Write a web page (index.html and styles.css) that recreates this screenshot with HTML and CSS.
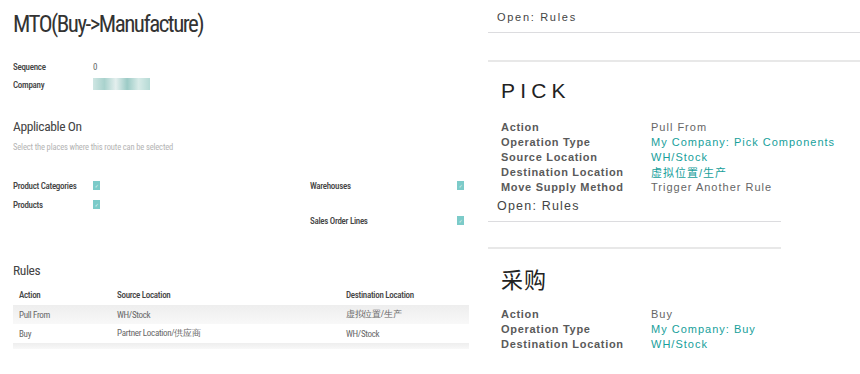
FILE: index.html
```html
<!DOCTYPE html>
<html>
<head>
<meta charset="utf-8">
<link rel="stylesheet" href="styles.css">
</head>
<body>
<div class="page">
  <section class="form">
    <h1 class="title">MTO(Buy-&gt;Manufacture)</h1>
    <div class="fields">
      <div class="field"><span class="lbl">Sequence</span><span class="val">0</span></div>
      <div class="field"><span class="lbl">Company</span><span class="val"><span class="blur"></span></span></div>
    </div>
    <h2 class="sect">Applicable On</h2>
    <p class="hint">Select the places where this route can be selected</p>
    <div class="applic">
      <div class="col">
        <div class="chk-row"><span class="lbl">Product Categories</span><span class="box">✓</span></div>
        <div class="chk-row"><span class="lbl">Products</span><span class="box">✓</span></div>
      </div>
      <div class="col col-r">
        <div class="chk-row"><span class="lbl lbl-r">Warehouses</span><span class="box">✓</span></div>
        <div class="chk-row gap"><span class="lbl lbl-r">Sales Order Lines</span><span class="box">✓</span></div>
      </div>
    </div>
    <h2 class="sect rules-h">Rules</h2>
    <table class="rules">
      <thead><tr><th class="c1">Action</th><th class="c2">Source Location</th><th>Destination Location</th></tr></thead>
      <tbody>
        <tr class="odd"><td>Pull From</td><td>WH/Stock</td><td>虚拟位置/生产</td></tr>
        <tr><td>Buy</td><td>Partner Location/供应商</td><td>WH/Stock</td></tr>
        <tr class="odd tail"><td></td><td></td><td></td></tr>
      </tbody>
    </table>
  </section>
  <section class="doc">
    <div class="open first">Open: Rules</div>
    <hr class="rule-a">
    <hr class="rule-b">
    <h3 class="rname">PICK</h3>
    <dl class="props">
      <div class="prop"><dt>Action</dt><dd>Pull From</dd></div>
      <div class="prop"><dt>Operation Type</dt><dd class="link">My Company: Pick Components</dd></div>
      <div class="prop"><dt>Source Location</dt><dd class="link">WH/Stock</dd></div>
      <div class="prop"><dt>Destination Location</dt><dd class="link">虚拟位置/生产</dd></div>
      <div class="prop"><dt>Move Supply Method</dt><dd>Trigger Another Rule</dd></div>
    </dl>
    <div class="open second">Open: Rules</div>
    <hr class="rule-a short">
    <hr class="rule-b short">
    <h3 class="rname cjk">采购</h3>
    <dl class="props">
      <div class="prop"><dt>Action</dt><dd>Buy</dd></div>
      <div class="prop"><dt>Operation Type</dt><dd class="link">My Company: Buy</dd></div>
      <div class="prop"><dt>Destination Location</dt><dd class="link">WH/Stock</dd></div>
    </dl>
  </section>
</div>
</body>
</html>
```
FILE: styles.css
```css
html, body { margin: 0; padding: 0; background: #fff; }
.page { display: flex; width: 860px; height: 374px; overflow: hidden; }

.form {
  width: 475px;
  padding-left: 13px;
  box-sizing: border-box;
  font-family: "Roboto Condensed", "DejaVu Sans Condensed", "Liberation Sans Narrow", Roboto, sans-serif;
  font-stretch: condensed;
  color: #4c4c4c;
}
.title { margin: 10px 0 0; font-size: 23px; font-weight: 400; color: #333; line-height: 30px; letter-spacing: -1.5px; }
.fields { margin-top: 18px; }
.field { display: flex; height: 18px; align-items: center; font-size: 9px; letter-spacing: -0.3px; }
.lbl { width: 80px; font-weight: 500; color: #444; }
.val { color: #666; }
.blur { display: inline-block; width: 57px; height: 12px; background: linear-gradient(90deg, #cfe6e3, #a9d2cd 20%, #e4efee 40%, #9ccbc6 60%, #d8ebe8 80%, #b5dad5); filter: blur(0.6px); }
.sect { margin: 22px 0 0; font-size: 13.5px; font-weight: 400; color: #444; line-height: 20px; letter-spacing: -0.4px; }
.hint { margin: 5px 0 0; font-size: 8.5px; color: #b4b4b4; line-height: 12px; letter-spacing: -0.15px; }
.applic { display: flex; margin-top: 23px; }
.col { width: 297px; }
.col-r { width: 160px; }
.chk-row { display: flex; align-items: center; height: 19px; font-size: 9px; letter-spacing: -0.3px; }
.chk-row.gap { margin-top: 16px; }
.lbl-r { width: 147px; }
.box { width: 7px; height: 9px; background: #7ccbc9; color: #e6f6f6; font-size: 5px; display: flex; align-items: center; justify-content: center; }
.rules-h { margin-top: 30px; }
.rules { margin-top: 5px; width: 456px; border-collapse: collapse; font-size: 9px; letter-spacing: -0.3px; }
.rules th { text-align: left; font-weight: 500; color: #444; height: 20px; padding: 0 0 0 6px; }
.rules th.c1 { width: 92px; }
.rules th.c2 { width: 223px; }
.rules td { height: 19px; padding: 0 0 0 6px; color: #666; }
.rules tr.odd td { background: linear-gradient(#eeeeee, #f8f8f8); }
.rules tr.tail td { height: 6px; }

.doc {
  flex: 1;
  margin-left: 13px;
  font-family: "Liberation Sans", Arial, "Noto Sans CJK SC", sans-serif;
  color: #666;
}
.open { font-size: 11px; color: #444; letter-spacing: 1.7px; padding-left: 9px; line-height: 14px; }
.open.first { margin-top: 10px; }
.open.second { margin-top: 5px; font-size: 12.5px; letter-spacing: 1.2px; }
hr { border: 0; margin: 0; height: 1px; }
.rule-a { margin-top: 8px; background: #dcdcdf; }
.rule-b { margin-top: 27px; background: #e8e8e8; height: 2px; }
.rule-a.short, .rule-b.short { width: 293px; }
.rule-b.short { margin-top: 25px; }
.rname { margin: 17px 0 0 13px; font-size: 21px; font-weight: 400; color: #222; letter-spacing: 5.2px; line-height: 24px; }
.rname.cjk { margin-top: 17px; font-size: 22px; letter-spacing: 1px; font-family: "Noto Sans CJK SC", sans-serif; }
.props { margin: 16px 0 0 13px; }
.rname.cjk + .props { margin-top: 16px; }
.prop { display: flex; height: 15px; align-items: center; font-size: 11px; letter-spacing: 0.7px; }
.prop dt { width: 150px; font-weight: 700; color: #5a5a5a; }
.prop dd { margin: 0; color: #666; letter-spacing: 1px; }
.prop dd.link { color: #17a09b; }
```
